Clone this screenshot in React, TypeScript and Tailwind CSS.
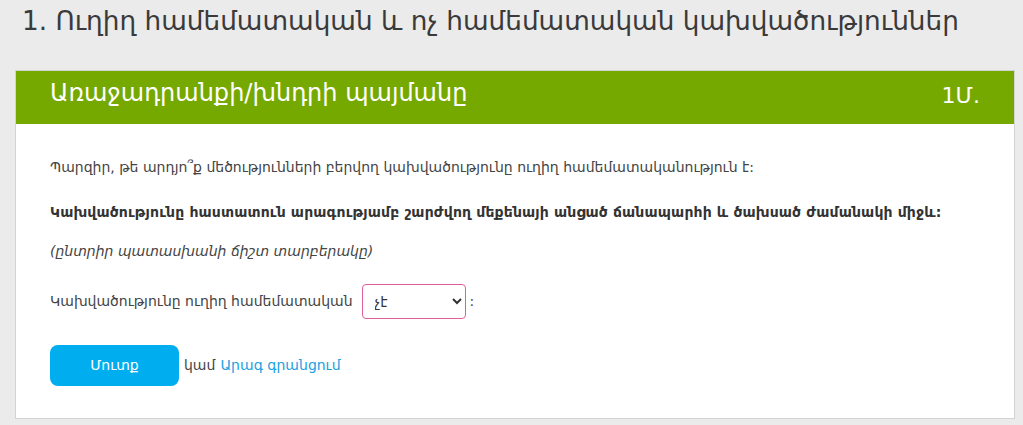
export default function App() {
  return (
    <div className="min-h-[425px] bg-[#ebebeb] pl-[15px] pr-[8px] pt-[2px] pb-[6px] text-[#333] [font-family:'DejaVu_Sans',sans-serif]">
      <h1 className="ml-[7px] whitespace-nowrap text-[26.3px] leading-[38px] text-[#3a3a3a]">
        1. Ուղիղ համեմատական և ոչ համեմատական կախվածություններ
      </h1>
      <div className="mt-[30px] border border-[#d3d3d3] bg-white">
        <div className="flex h-[53px] items-start justify-between bg-[#76a900] pl-[34px] pr-[34px] text-white">
          <span className="pt-[8px] text-[24px] leading-[28px]">Առաջադրանքի/խնդրի պայմանը</span>
          <span className="pt-[11px] text-[22px] leading-[28px]">1Մ.</span>
        </div>
        <div className="px-[34px] pt-[33px] pb-[32px] text-[14px]">
          <p className="text-[#444]">Պարզիր, թե արդյո՞ք մեծությունների բերվող կախվածությունը ուղիղ համեմատականություն է:</p>
          <p className="mt-[24px] font-bold tracking-[0.15px] text-[#333]">
            Կախվածությունը հաստատուն արագությամբ շարժվող մեքենայի անցած ճանապարհի և ծախսած ժամանակի միջև:
          </p>
          <p className="mt-[18px] italic text-[#444]">(ընտրիր պատասխանի ճիշտ տարբերակը)</p>
          <div className="mt-[22px] flex items-center text-[#444]">
            <span>Կախվածությունը ուղիղ համեմատական</span>
            <select
              defaultValue="no"
              className="ml-[9px] h-[35px] w-[104px] rounded-[4px] border border-[#e05e9e] bg-white pl-[8px] text-[14px] text-[#333]"
            >
              <option value="no">չէ</option>
              <option value="yes">է</option>
            </select>
            <span className="ml-[4px]">:</span>
          </div>
          <div className="mt-[26px] flex items-center gap-[5px]">
            <button type="button" className="h-[41px] w-[129px] rounded-[8px] bg-[#00aeef] text-[14px] text-white">
              Մուտք
            </button>
            <span className="text-[#444]">կամ</span>
            <a className="text-[#1ba1e2]" href="#">Արագ գրանցում</a>
          </div>
        </div>
      </div>
    </div>
  );
}
